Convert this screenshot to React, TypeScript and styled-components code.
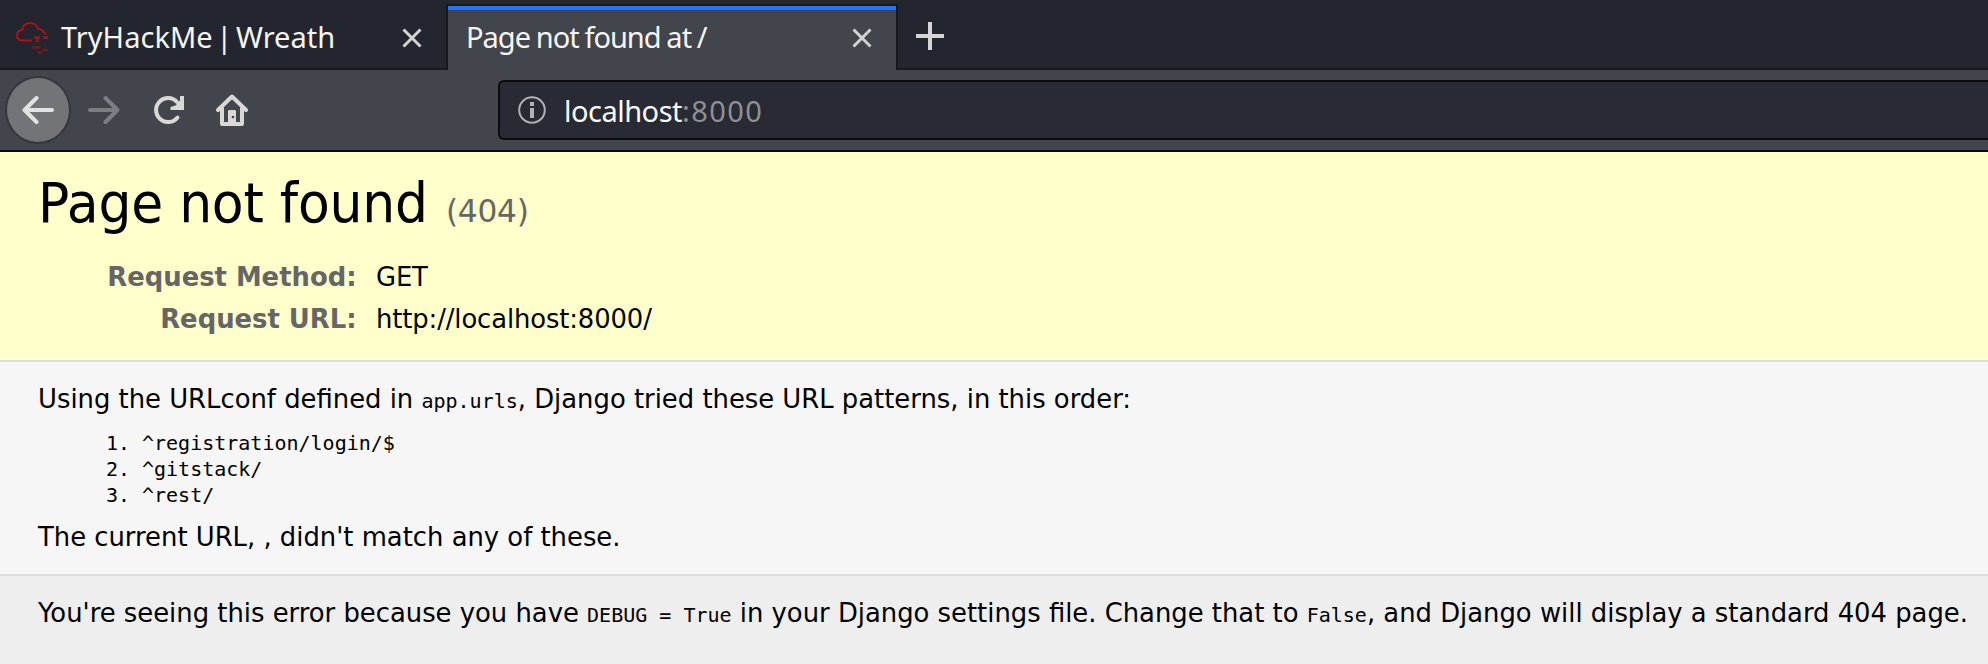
import React from 'react';
import styled, { createGlobalStyle } from 'styled-components';

const GlobalStyle = createGlobalStyle`
  * { box-sizing: border-box; }
  html, body { margin: 0; padding: 0; }
  body { background: #eee; overflow: hidden; }
`;

const Window = styled.div`
  display: flex;
  flex-direction: column;
  width: 100%;
  height: 664px;
  overflow: hidden;
  background: #eeeeee;
`;

const TabStrip = styled.div`
  display: flex;
  flex: none;
  height: 70px;
  background: #23262f;
`;

const Tab = styled.div`
  display: flex;
  align-items: center;
  flex: none;
  width: 446px;
  height: 70px;
  padding: 8px 24px 0 16px;
  border-bottom: 2px solid #17191f;
  color: #f5f5f4;
`;

const ActiveTab = styled(Tab)`
  width: 452px;
  height: 66px;
  margin-top: 4px;
  padding: 0 24px 0 18px;
  border: 2px solid #17191f;
  border-bottom: 0;
  background: #42454c;
  box-shadow: inset 0 4px 0 #2374ff;
`;

const TabTitle = styled.span<{ $tracking: number; $words: number }>`
  flex: 1;
  margin-top: -2px;
  font: 29px/40px 'Noto Sans', sans-serif;
  letter-spacing: ${(p) => p.$tracking}px;
  word-spacing: ${(p) => p.$words}px;
  white-space: nowrap;
`;

const Favicon = styled.svg`
  flex: none;
  width: 32px;
  height: 32px;
  margin-right: 13px;
`;

const CloseIcon = styled.svg`
  flex: none;
  width: 20px;
  height: 20px;
`;

const StripRest = styled.div`
  display: flex;
  align-items: center;
  flex: 1;
  padding: 4px 0 0 18px;
  border-bottom: 2px solid #17191f;
`;

const Toolbar = styled.div`
  display: flex;
  align-items: center;
  flex: none;
  height: 82px;
  padding-left: 5px;
  background: #42454c;
  border-bottom: 2px solid #0c0c0e;
`;

const BackButton = styled.div`
  display: grid;
  place-items: center;
  flex: none;
  width: 66px;
  height: 68px;
  border: 2px solid #35373c;
  border-radius: 50%;
  background: #737478;
`;

const NavIcon = styled.svg<{ $gap: number }>`
  flex: none;
  width: 32px;
  height: 32px;
  margin-left: ${(p) => p.$gap}px;
`;

const AddressBar = styled.div`
  display: flex;
  align-items: center;
  flex: 1;
  height: 60px;
  margin-left: 250px;
  padding-left: 18px;
  border: 2px solid #0c0c0e;
  border-right: 0;
  border-radius: 6px 0 0 6px;
  background: #282a34;
`;

const InfoIcon = styled.svg`
  flex: none;
  width: 28px;
  height: 28px;
`;

const Address = styled.span`
  margin-top: 2px;
  margin-left: 18px;
  font: 29px/40px 'Noto Sans', sans-serif;
  letter-spacing: -0.5px;
  color: #fafafa;
`;

const Port = styled.span`
  letter-spacing: 1.4px;
  color: #8f9092;
`;

const Section = styled.section<{ $tone: string; $top: number }>`
  flex: none;
  padding: ${(p) => p.$top}px 0 0 38px;
  background: ${(p) => p.$tone};
  font: 25.85px/32px 'DejaVu Sans', sans-serif;
  color: #000;
`;

const Summary = styled(Section)`
  height: 210px;
  border-bottom: 2px solid #dddddd;
`;

const Info = styled(Section)`
  height: 214px;
  border-bottom: 2px solid #dddddd;
`;

const Explanation = styled(Section)`
  flex: 1;
`;

const Title = styled.h1`
  height: 60px;
  margin: 0 0 22px;
  font-size: 52px;
  font-weight: 400;
  line-height: 60px;
  letter-spacing: -0.25px;
  white-space: nowrap;
  transform: scaleY(1.05);
  transform-origin: 0 48px;
`;

const Status = styled.span`
  margin-left: 2px;
  font-size: 31.2px;
  line-height: 1;
  color: #666;
`;

const Meta = styled.dl`
  display: grid;
  grid-template-columns: 318.5px 1fr;
  column-gap: 19.5px;
  margin: 0;
  line-height: 42px;
`;

const MetaName = styled.dt`
  font-weight: 700;
  text-align: right;
  color: #666;
`;

const MetaValue = styled.dd`
  margin: 0;
  letter-spacing: -0.12px;
`;

const Text = styled.p`
  margin: 0;
  white-space: nowrap;
`;

const Code = styled.code`
  font: 20px/1 'DejaVu Sans Mono', monospace;
`;

const Patterns = styled.ol`
  margin: 15px 0 13px;
  padding: 0 0 0 68px;
  list-style: none;
  font: 20px/26px 'DejaVu Sans Mono', monospace;
`;

const Pattern = styled.li`
  display: flex;
`;

const Marker = styled.span`
  width: 36px;
`;

const patterns = ['^registration/login/$', '^gitstack/', '^rest/'];

function Close() {
  return (
    <CloseIcon viewBox="0 0 20 20" fill="none" stroke="#d2d2d0" strokeWidth="3">
      <path d="M1.5 1.5l17 17M18.5 1.5l-17 17" />
    </CloseIcon>
  );
}

export default function App() {
  return (
    <Window>
      <GlobalStyle />
      <TabStrip>
        <Tab>
          <Favicon viewBox="0 0 32 32" fill="none" stroke="#a91319" strokeWidth="2">
            <path d="M16 18.500H5.500C2.500 18 1 15.500 1 13c0-3 2-4.500 5-5C7 3.500 10 1 14 1c4.500 0 7 2.500 8 6 4 0 6 2 7.500 5.500" />
            <path d="M18 15.500h6M27 15.500h5M20 18.500h3" stroke="#871a20" strokeWidth="3" />
            <path d="M16 25.500h9M22 30.500h4M26 28h6" stroke="#6b1c23" strokeWidth="2.500" />
          </Favicon>
          <TabTitle $tracking={0.05} $words={-4}>TryHackMe | Wreath</TabTitle>
          <Close />
        </Tab>
        <ActiveTab>
          <TabTitle $tracking={-1} $words={-0.8}>Page not found at /</TabTitle>
          <Close />
        </ActiveTab>
        <StripRest>
          <svg width="28" height="28" viewBox="0 0 28 28" stroke="#d6d6d4" strokeWidth="4">
            <path d="M14 0v28M0 14h28" />
          </svg>
        </StripRest>
      </TabStrip>
      <Toolbar>
        <BackButton>
          <svg width="32" height="32" viewBox="0 0 32 32" fill="none" stroke="#e2e2e0" strokeWidth="4" strokeLinecap="round" strokeLinejoin="round">
            <path d="M30 16H3M14.500 4L2.500 16l12 12" />
          </svg>
        </BackButton>
        <NavIcon $gap={17} viewBox="0 0 32 32" fill="none" stroke="#7d7e82" strokeWidth="4" strokeLinecap="round" strokeLinejoin="round">
          <path d="M2 16h27M17.500 4l12 12-12 12" />
        </NavIcon>
        <NavIcon $gap={32} viewBox="0 0 32 32" fill="none" stroke="#d8d8d5" strokeWidth="4">
          <path d="M25.500 23.500A12 12 0 1 1 25 8" strokeLinecap="round" />
          <path d="M32 2v14H18.500v-3l5-1.500 4.500-5V2z" fill="#d8d8d5" stroke="none" />
        </NavIcon>
        <NavIcon $gap={32} viewBox="0 0 32 32">
          <path d="M2 16L16 2.500 30 16M6 14v16h20V14" fill="none" stroke="#d8d8d5" strokeWidth="4" strokeLinecap="round" strokeLinejoin="round" />
          <path d="M12 30V17q0-1 1-1h6q1 0 1 1v13z" fill="#d8d8d5" />
          <circle cx="17" cy="23" r="1.300" fill="#42454c" />
        </NavIcon>
        <AddressBar>
          <InfoIcon viewBox="0 0 28 28">
            <circle cx="14" cy="14" r="12.800" fill="none" stroke="#b1b2b5" strokeWidth="2" />
            <path d="M12 6h4v4h-4zM12 12h4v10h-4z" fill="#b1b2b5" />
          </InfoIcon>
          <Address>
            localhost<Port>:8000</Port>
          </Address>
        </AddressBar>
      </Toolbar>
      <Summary $tone="#ffffcc" $top={22}>
        <Title>
          Page not found <Status>(404)</Status>
        </Title>
        <Meta>
          <MetaName>Request Method:</MetaName>
          <MetaValue>GET</MetaValue>
          <MetaName>Request URL:</MetaName>
          <MetaValue>http://localhost:8000/</MetaValue>
        </Meta>
      </Summary>
      <Info $tone="#f6f6f6" $top={21}>
        <Text>
          Using the URLconf defined in <Code>app.urls</Code>, Django tried these URL patterns, in this order:
        </Text>
        <Patterns>
          {patterns.map((pattern, i) => (
            <Pattern key={pattern}>
              <Marker>{i + 1}.</Marker>
              {pattern}
            </Pattern>
          ))}
        </Patterns>
        <Text>The current URL, , didn't match any of these.</Text>
      </Info>
      <Explanation $tone="#eeeeee" $top={21}>
        <Text>
          You're seeing this error because you have <Code>DEBUG = True</Code> in your Django settings
          file. Change that to <Code>False</Code>, and Django will display a standard 404 page.
        </Text>
      </Explanation>
    </Window>
  );
}
